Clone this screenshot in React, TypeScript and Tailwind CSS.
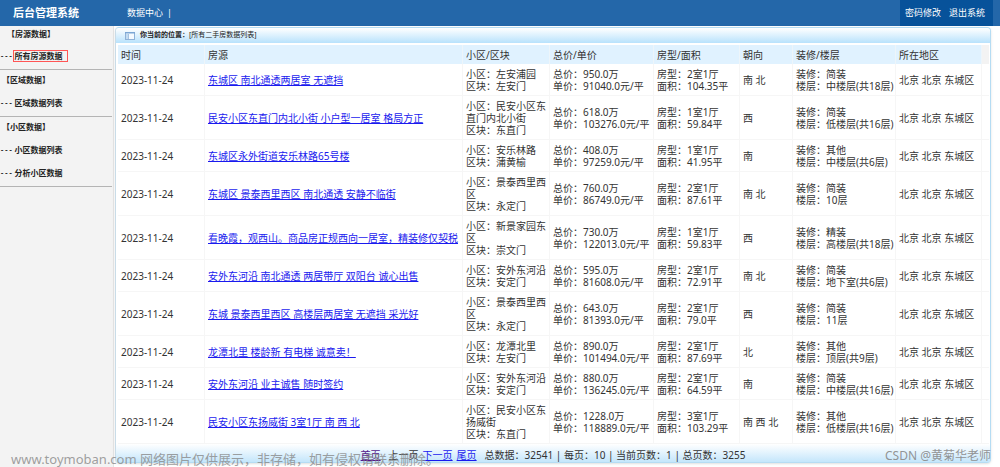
import React from "react";

type House = {
  title: string;
  community: string;
  block: string;
  total: string;
  unit: string;
  rooms: string;
  area: string;
  facing: string;
  fitment: string;
  floor: string;
};

const menu = [
  { title: "【房源数据】", items: ["所有房源数据"] },
  { title: "【区域数据】", items: ["区域数据列表"] },
  { title: "【小区数据】", items: ["小区数据列表", "分析小区数据"] },
];

const houses: House[] = [
  { title: "东城区 南北通透两居室 无遮挡", community: "左安浦园", block: "左安门", total: "950.0万", unit: "91040.0元/平", rooms: "2室1厅", area: "104.35平", facing: "南 北", fitment: "简装", floor: "中楼层(共18层)" },
  { title: "民安小区东直门内北小街 小户型一居室 格局方正", community: "民安小区东直门内北小街", block: "东直门", total: "618.0万", unit: "103276.0元/平", rooms: "1室1厅", area: "59.84平", facing: "西", fitment: "简装", floor: "低楼层(共16层)" },
  { title: "东城区永外街道安乐林路65号楼", community: "安乐林路", block: "蒲黄榆", total: "408.0万", unit: "97259.0元/平", rooms: "1室1厅", area: "41.95平", facing: "南", fitment: "其他", floor: "中楼层(共6层)" },
  { title: "东城区 景泰西里西区 南北通透 安静不临街", community: "景泰西里西区", block: "永定门", total: "760.0万", unit: "86749.0元/平", rooms: "2室1厅", area: "87.61平", facing: "南 北", fitment: "简装", floor: "10层" },
  { title: "看晚霞，观西山。商品房正规西向一居室，精装修仅契税", community: "新景家园东区", block: "崇文门", total: "730.0万", unit: "122013.0元/平", rooms: "1室1厅", area: "59.83平", facing: "西", fitment: "精装", floor: "高楼层(共18层)" },
  { title: "安外东河沿 南北通透 两居带厅 双阳台 诚心出售", community: "安外东河沿", block: "安定门", total: "595.0万", unit: "81608.0元/平", rooms: "2室1厅", area: "72.91平", facing: "南 北", fitment: "简装", floor: "地下室(共6层)" },
  { title: "东城 景泰西里西区 高楼层两居室 无遮挡 采光好", community: "景泰西里西区", block: "永定门", total: "643.0万", unit: "81393.0元/平", rooms: "2室1厅", area: "79.0平", facing: "西", fitment: "简装", floor: "11层" },
  { title: "龙潭北里 楼龄新 有电梯 诚意卖！", community: "龙潭北里", block: "左安门", total: "890.0万", unit: "101494.0元/平", rooms: "2室1厅", area: "87.69平", facing: "北", fitment: "其他", floor: "顶层(共9层)" },
  { title: "安外东河沿 业主诚售 随时签约", community: "安外东河沿", block: "安定门", total: "880.0万", unit: "136245.0元/平", rooms: "2室1厅", area: "64.59平", facing: "南", fitment: "简装", floor: "中楼层(共16层)" },
  { title: "民安小区东扬威街 3室1厅 南 西 北", community: "民安小区东扬威街", block: "东直门", total: "1228.0万", unit: "118889.0元/平", rooms: "3室1厅", area: "103.29平", facing: "南 西 北", fitment: "其他", floor: "低楼层(共16层)" },
];

const columns = ["时间", "房源", "小区/区块", "总价/单价", "房型/面积", "朝向", "装修/楼层", "所在地区"];

const cell = "border-r border-b border-[#f6f6f6] pl-[3px] pt-1 pb-[3px] align-middle";

function PanelIcon() {
  return (
    <svg width="10" height="8" viewBox="0 0 10 8" aria-hidden="true">
      <rect x="0.5" y="0.5" width="9" height="7" fill="#f4faff" stroke="#8fb2d8" />
      <rect x="0" y="0" width="10" height="1.5" fill="#7ba6d4" />
      <rect x="1" y="2" width="2" height="5" fill="#c3dcf2" />
      <path d="M3.5 2v5" stroke="#a5c3e2" />
    </svg>
  );
}

function Header() {
  return (
    <header className="flex h-[26px] items-stretch bg-[#2467a9] text-[9px] text-white">
      <h1 className="flex w-[127px] items-center pl-[13px] text-[11px] font-bold">后台管理系统</h1>
      <nav className="flex flex-1 items-center gap-1">
        <a href="#data">数据中心</a>
        <span>|</span>
      </nav>
      <div className="mr-[7px] flex items-center gap-2 bg-[#07529a] pl-[5px] pr-2">
        <a href="#password">密码修改</a>
        <a href="#logout">退出系统</a>
      </div>
    </header>
  );
}

function Sidebar() {
  return (
    <aside className="w-[114px] shrink-0 border-r border-[#e4e4e4] bg-[#f3f3f3] pr-px text-[8px] font-bold text-[#222]">
      {menu.map((section, i) => (
        <section key={section.title} className="border-b border-[#b4b4b4]">
          <h2 className={i === 0 ? "flex h-5 items-center pb-1 pl-[7px]" : "flex h-[23px] items-center pb-[3px] pl-0.5"}>
            {section.title}
          </h2>
          {section.items.map((item) => (
            <div key={item} className="flex h-[23px] items-center pb-[3px]">
              <span className="font-['Liberation_Mono'] text-[7px]">---</span>
              <a
                href="#list"
                className={`flex h-3 items-center border pl-px pr-1 ${
                  item === "所有房源数据" ? "border-[#f55]" : "border-transparent"
                }`}
              >
                {item}
              </a>
            </div>
          ))}
        </section>
      ))}
    </aside>
  );
}

function HouseTable() {
  return (
    <table className="w-full table-fixed border-separate border-spacing-0 text-left leading-3">
      <colgroup>
        <col className="w-[87px]" />
        <col />
        <col className="w-[87px]" />
        <col className="w-[104px]" />
        <col className="w-[86px]" />
        <col className="w-[53px]" />
        <col className="w-[103px]" />
        <col className="w-[86px]" />
        <col className="w-[7px]" />
      </colgroup>
      <thead>
        <tr className="h-[19px] bg-[#e0f2ff]">
          {columns.map((name) => (
            <th key={name} className="border-r border-[#edf5fa] pl-[3px] font-normal">
              {name}
            </th>
          ))}
          <td className="bg-[#f3f3f3]" />
        </tr>
      </thead>
      <tbody>
        {houses.map((h) => (
          <tr key={h.title}>
            <td className={cell}>2023-11-24</td>
            <td className={cell}>
              <a href="#house" className="text-[#1a1aee] underline">{h.title}</a>
            </td>
            <td className={cell}>
              <p>{`小区：${h.community}`}</p>
              <p>{`区块：${h.block}`}</p>
            </td>
            <td className={cell}>
              <p>{`总价：${h.total}`}</p>
              <p>{`单价：${h.unit}`}</p>
            </td>
            <td className={cell}>
              <p>{`房型：${h.rooms}`}</p>
              <p>{`面积：${h.area}`}</p>
            </td>
            <td className={cell}>{h.facing}</td>
            <td className={cell}>
              <p>{`装修：${h.fitment}`}</p>
              <p>{`楼层：${h.floor}`}</p>
            </td>
            <td className={cell}>北京 北京 东城区</td>
            <td className="border-b border-[#f6f6f6]" />
          </tr>
        ))}
      </tbody>
    </table>
  );
}

function Pager() {
  return (
    <footer className="flex h-[18px] items-center justify-center gap-1 bg-linear-to-b from-white to-[#c4e6fb] pt-1 whitespace-pre">
      <a href="#first" className="text-[#551a8b] underline">首页</a>
      <span className="ml-1">上一页</span>
      <a href="#next" className="text-[#1a1aee] underline">下一页</a>
      <a href="#last" className="text-[#1a1aee] underline">尾页</a>
      <span className="ml-1">总数据：32541 | 每页：10 | 当前页数：1 | 总页数：3255</span>
    </footer>
  );
}

export default function App() {
  return (
    <div className="relative flex min-h-screen flex-col bg-white font-['Noto_Sans','Noto_Sans_CJK_SC',sans-serif] text-[10px] text-[#333]">
      <Header />
      <div className="flex flex-1">
        <Sidebar />
        <main className="min-w-0 flex-1 pt-px pr-[9px] pl-px">
          <div className="rounded border border-[#b5dcf3] border-l-[#c9dce8] shadow-sm">
            <div className="flex h-[15px] items-center rounded-t bg-linear-to-b from-white to-[#b8e2fc] pl-[9px] text-[7px] text-[#222]">
              <PanelIcon />
              <strong className="ml-[5px]">你当前的位置：</strong>
              <span>[所有二手房数据列表]</span>
            </div>
            <div className="pt-0.5 pr-px pl-0.5">
              <HouseTable />
            </div>
            <Pager />
          </div>
        </main>
      </div>
      <p className="pointer-events-none absolute bottom-0 left-[11px] text-[13px] leading-4 text-[#888]/80">
        www.toymoban.com 网络图片仅供展示，非存储，如有侵权请联系删除。
      </p>
      <p className="pointer-events-none absolute right-[9px] bottom-[3px] text-[12px] leading-4 text-[#888]/90">
        CSDN @黄菊华老师
      </p>
    </div>
  );
}
